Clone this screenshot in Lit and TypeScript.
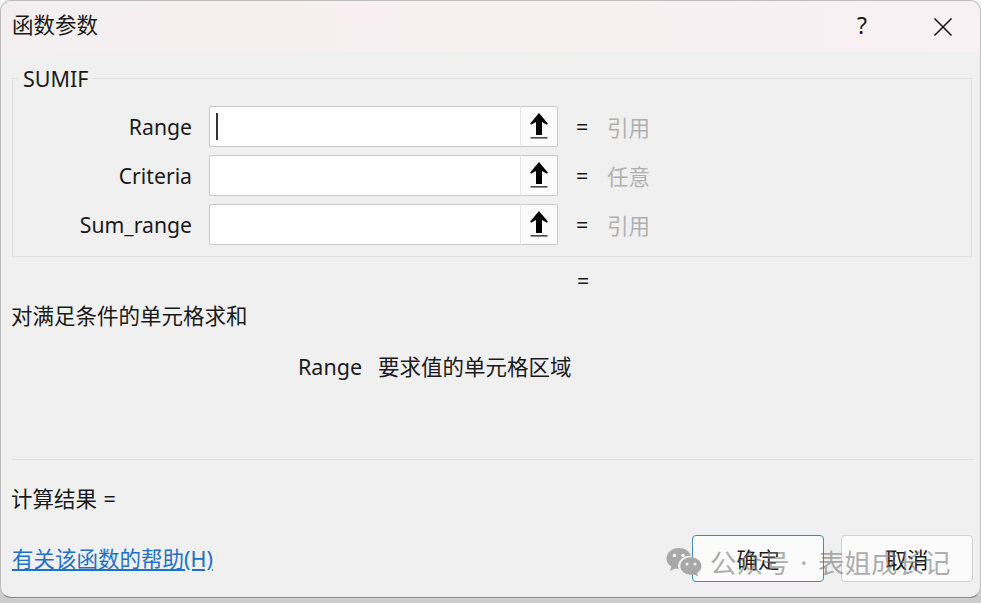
import { LitElement, html, css, svg } from "lit";
import { customElement } from "lit/decorators.js";

const ROWS = [
  { label: "Range", value: "引用", caret: true },
  { label: "Criteria", value: "任意", caret: false },
  { label: "Sum_range", value: "引用", caret: false },
];

const upArrow = svg`<svg width="20" height="27" viewBox="0 0 20 27"><path d="M10 0 L18.800 10.500 L18 11.800 L13 9 L13 22 L7 22 L7 9 L2 11.800 L1.200 10.500 Z" fill="#000"/><rect x="1.500" y="24.200" width="17" height="1.300" fill="#222"/></svg>`;

const wechat = svg`<svg width="36" height="33" viewBox="0 0 36 33">
  <path d="M13 1C6 1 .5 5.600.5 11.400c0 3.400 1.900 6.300 4.800 8.200L4 24l5-2.600c1.200.3 2.400.5 3.600.5-.3-1-.5-2-.5-3 0-5.700 5.300-10.200 11.900-10.200h.9C23.700 4.300 18.800 1 13 1z" fill="#a8a8a8"/>
  <path d="M35.500 19c0-4.900-4.800-8.800-10.600-8.800S14.300 14.100 14.300 19s4.800 8.800 10.600 8.800c1.100 0 2.200-.1 3.200-.4l4 2.300-1-3.700c2.700-1.700 4.400-4.200 4.400-7z" fill="#a8a8a8"/>
  <circle cx="8.500" cy="8.500" r="1.800" fill="#f0f0f0"/><circle cx="17" cy="8.500" r="1.800" fill="#f0f0f0"/>
  <circle cx="21" cy="17" r="1.500" fill="#f0f0f0"/><circle cx="29" cy="17" r="1.500" fill="#f0f0f0"/>
</svg>`;

@customElement("app-root")
export class AppRoot extends LitElement {
  static styles = css`
    :host {
      display: block;
      width: 981px;
      height: 603px;
      overflow: hidden;
      background: linear-gradient(#f6f6f6 0 90%, #cdcdcd 98%);
      font-family: "Noto Sans", "Noto Sans CJK SC", sans-serif;
      font-size: 21.500px;
      color: #1a1a1a;
    }
    .window {
      position: relative;
      box-sizing: border-box;
      width: 981px;
      height: 598px;
      background: #f0f0f0;
      border: 1px solid #bdbdbd;
      border-bottom-color: #8a8a8a;
      border-radius: 11px;
      overflow: hidden;
      display: flex;
      flex-direction: column;
    }
    .titlebar {
      height: 51px;
      flex: none;
      background: linear-gradient(90deg, #f3eff0 0%, #f8eff1 50%, #f8f0f3 100%);
      display: flex;
      align-items: center;
      padding: 0 28px 0 11px;
    }
    .title { flex: 1; font-size: 21.500px; margin-top: -6px; }
    .help { width: 22px; font-size: 23px; text-align: center; margin-right: 61px; margin-top: -4px; }
    .close { display: block; }
    .group {
      margin: 26px 8px 0 11px;
      height: 179px;
      box-sizing: border-box;
      border: 1px solid #e0e0e0;
      position: relative;
      display: flex;
      flex-direction: column;
      gap: 7.750px;
      padding-top: 27px;
    }
    .legend {
      position: absolute;
      left: 6px;
      top: -14px;
      padding: 0 4px;
      background: #f0f0f0;
      line-height: 28px;
      font-size: 21.500px;
    }
    .row { display: grid; grid-template-columns: 196px 311px 38px 49px auto; align-items: center; height: 41px; }
    .label { text-align: right; padding-right: 17px; font-size: 21.200px; }
    .input {
      height: 41px;
      box-sizing: border-box;
      background: #fff;
      border: 1px solid #c8c8c8;
      border-right: none;
      border-radius: 2px 0 0 2px;
      display: flex;
      align-items: center;
      padding-left: 6px;
    }
    .caret { width: 1.500px; height: 27px; background: #333; }
    .pick {
      height: 41px;
      box-sizing: border-box;
      background: #fbfbfb;
      border: 1px solid #c8c8c8;
      border-left-color: #e4e4e4;
      border-radius: 0 2px 2px 0;
      display: flex;
      align-items: center;
      justify-content: center;
    }
    .eq { padding-left: 18px; }
    .val { color: #b0b0b0; }
    .lone { margin: 9px 0 0 576px; line-height: 30px; height: 30px; }
    .desc { margin: 5px 0 0 10px; line-height: 30px; height: 30px; }
    .argdesc { margin: 21px 0 0 297px; line-height: 30px; height: 30px; display: flex; gap: 16px; }
    .sep { margin: 77px 7px 0 11px; height: 1px; background: #e0e0e0; flex: none; }
    .result { margin: 24px 0 0 10px; line-height: 30px; height: 30px; }
    .result span { margin-left: 1px; }
    .bottom { margin: 21px 7px 0 11px; display: flex; align-items: center; }
    .link { color: #1f71c6; text-decoration: underline; font-size: 21.500px; flex: 1; line-height: 30px; }
    .btn {
      width: 132px;
      height: 47px;
      box-sizing: border-box;
      border: 1px solid #d0d0d0;
      border-radius: 4px;
      background: #fbfbfb;
      display: flex;
      align-items: center;
      justify-content: center;
      font: inherit;
      color: inherit;
      padding: 0;
    }
    .btn.primary { border: 1.500px solid #3f8cb4; margin-right: 17px; }
    .mark {
      position: absolute;
      left: 665px;
      top: 546px;
      display: flex;
      align-items: center;
      gap: 8px;
      color: rgba(120, 120, 120, 0.62);
      font-size: 26.500px;
      white-space: pre;
      line-height: 33px;
    }
    .dot { margin: 0 10.750px; }
  `;

  render() {
    return html`
      <div class="window">
        <div class="titlebar">
          <span class="title">函数参数</span>
          <span class="help">?</span>
          <svg class="close" width="18" height="18" viewBox="0 0 18 18"><path d="M.5 .5L17.500 17.500M17.500 .5L.5 17.500" stroke="#111" stroke-width="1.500" fill="none"/></svg>
        </div>
        <div class="group">
          <span class="legend">SUMIF</span>
          ${ROWS.map(
            (r) => html`
              <div class="row">
                <span class="label">${r.label}</span>
                <div class="input">${r.caret ? html`<span class="caret"></span>` : ""}</div>
                <div class="pick">${upArrow}</div>
                <span class="eq">=</span>
                <span class="val">${r.value}</span>
              </div>
            `
          )}
        </div>
        <div class="lone">=</div>
        <div class="desc">对满足条件的单元格求和</div>
        <div class="argdesc"><span>Range</span><span>要求值的单元格区域</span></div>
        <div class="sep"></div>
        <div class="result">计算结果 <span>=</span></div>
        <div class="bottom">
          <span class="link">有关该函数的帮助(H)</span>
          <button class="btn primary">确定</button>
          <button class="btn">取消</button>
        </div>
        <div class="mark">${wechat}<span>公众号<span class="dot">·</span>表姐成长记</span></div>
      </div>
    `;
  }
}
